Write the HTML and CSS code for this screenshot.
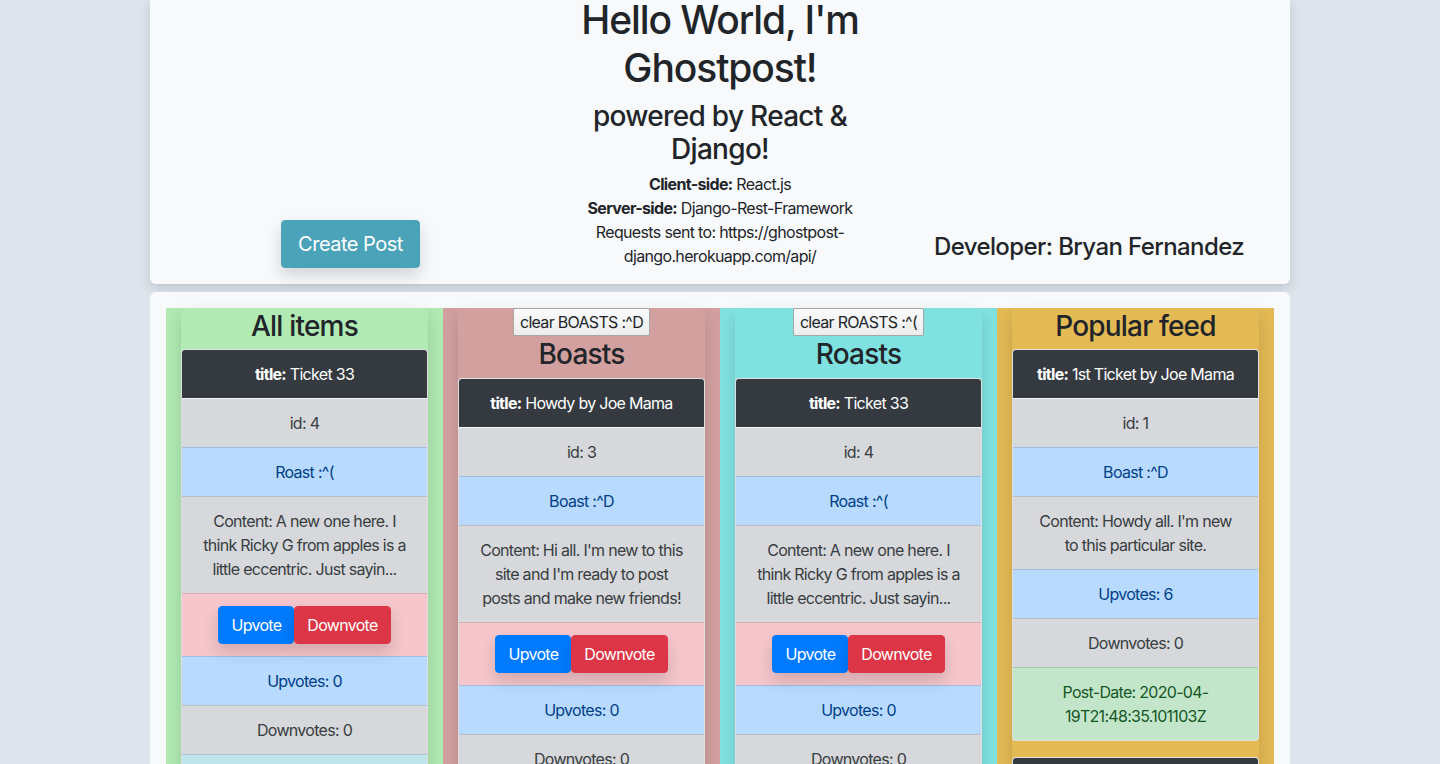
FILE: index.html
```html
<!DOCTYPE html>
<html lang="en">
<head>
<meta charset="utf-8">
<title>Ghostpost</title>
<link rel="stylesheet" href="styles.css">
</head>
<body>
<div class="container">
  <header class="hero">
    <div class="hero-left">
      <button class="btn-create">Create Post</button>
    </div>
    <div class="hero-mid">
      <h1 class="hero-title">Hello World, I'm Ghostpost!</h1>
      <h3 class="hero-sub">powered by React &amp; Django!</h3>
      <p class="hero-info"><b>Client-side:</b> React.js</p>
      <p class="hero-info"><b>Server-side:</b> Django-Rest-Framework</p>
      <p class="hero-info">Requests sent to: https://ghostpost-django.herokuapp.com/api/</p>
    </div>
    <div class="hero-right">
      <h4 class="dev">Developer: Bryan Fernandez</h4>
    </div>
  </header>

  <main class="board">
    <section class="lane lane-green">
      <div class="lane-inner">
        <h3 class="lane-title">All items</h3>
        <div class="post">
          <div class="row row-title"><b>title:</b> Ticket 33</div>
          <div class="row row-secondary">id: 4</div>
          <div class="row row-primary">Roast :^(</div>
          <div class="row row-secondary">Content: A new one here. I think Ricky G from apples is a little eccentric. Just sayin...</div>
          <div class="row row-danger"><span class="votes"><button class="btn btn-up">Upvote</button><button class="btn btn-down">Downvote</button></span></div>
          <div class="row row-primary">Upvotes: 0</div>
          <div class="row row-secondary">Downvotes: 0</div>
          <div class="row row-info">Post-Date: 2020-04-19T21:52:10.204411Z</div>
        </div>
      </div>
    </section>

    <section class="lane lane-rose">
      <div class="lane-inner">
        <button class="btn-clear">clear BOASTS :^D</button>
        <h3 class="lane-title">Boasts</h3>
        <div class="post">
          <div class="row row-title"><b>title:</b> Howdy by Joe Mama</div>
          <div class="row row-secondary">id: 3</div>
          <div class="row row-primary">Boast :^D</div>
          <div class="row row-secondary">Content: Hi all. I'm new to this site and I'm ready to post posts and make new friends!</div>
          <div class="row row-danger"><span class="votes"><button class="btn btn-up">Upvote</button><button class="btn btn-down">Downvote</button></span></div>
          <div class="row row-primary">Upvotes: 0</div>
          <div class="row row-secondary">Downvotes: 0</div>
          <div class="row row-info">Post-Date: 2020-04-19T21:50:02.311274Z</div>
        </div>
      </div>
    </section>

    <section class="lane lane-cyan">
      <div class="lane-inner">
        <button class="btn-clear">clear ROASTS :^(</button>
        <h3 class="lane-title">Roasts</h3>
        <div class="post">
          <div class="row row-title"><b>title:</b> Ticket 33</div>
          <div class="row row-secondary">id: 4</div>
          <div class="row row-primary">Roast :^(</div>
          <div class="row row-secondary">Content: A new one here. I think Ricky G from apples is a little eccentric. Just sayin...</div>
          <div class="row row-danger"><span class="votes"><button class="btn btn-up">Upvote</button><button class="btn btn-down">Downvote</button></span></div>
          <div class="row row-primary">Upvotes: 0</div>
          <div class="row row-secondary">Downvotes: 0</div>
          <div class="row row-info">Post-Date: 2020-04-19T21:52:10.204411Z</div>
        </div>
      </div>
    </section>

    <section class="lane lane-gold">
      <div class="lane-inner">
        <h3 class="lane-title">Popular feed</h3>
        <div class="post">
          <div class="row row-title"><b>title:</b> 1st Ticket by Joe Mama</div>
          <div class="row row-secondary">id: 1</div>
          <div class="row row-primary">Boast :^D</div>
          <div class="row row-secondary">Content: Howdy all. I'm new to this particular site.</div>
          <div class="row row-primary">Upvotes: 6</div>
          <div class="row row-secondary">Downvotes: 0</div>
          <div class="row row-success">Post-Date: 2020-04-19T21:48:35.101103Z</div>
        </div>
        <div class="post">
          <div class="row row-title"><b>title:</b> Howdy by Joe Mama</div>
          <div class="row row-secondary">id: 3</div>
          <div class="row row-primary">Boast :^D</div>
          <div class="row row-secondary">Content: Hi all. I'm new to this site and I'm ready to post posts and make new friends!</div>
          <div class="row row-primary">Upvotes: 2</div>
          <div class="row row-secondary">Downvotes: 0</div>
          <div class="row row-success">Post-Date: 2020-04-19T21:50:02.311274Z</div>
        </div>
      </div>
    </section>
  </main>
</div>
</body>
</html>
```

FILE: styles.css
```css
* { box-sizing: border-box; }

html, body {
  margin: 0;
  padding: 0;
}

body {
  background: #dee4ec;
  font-family: Inter, "Liberation Sans", Arial, sans-serif;
  font-size: 16px;
  line-height: 24px;
  color: #212529;
  overflow: hidden;
  height: 764px;
}

.container {
  width: 1140px;
  margin: 0 auto;
}

/* ---------- header card ---------- */
.hero {
  background: #f8f9fb;
  border-radius: 0 0 6px 6px;
  box-shadow: 0 4px 12px rgba(0, 0, 0, 0.14);
  height: 284px;
  display: grid;
  grid-template-columns: 1fr 350px 1fr;
  align-items: end;
  padding-bottom: 16px;
}

.hero-left,
.hero-right {
  display: flex;
  justify-content: center;
}

.hero-mid {
  text-align: center;
  align-self: start;
}

.hero-title {
  font-size: 39px;
  line-height: 48px;
  font-weight: 500;
  margin: -4px 0 8px;
  letter-spacing: -1.1px;
}

.hero-sub {
  font-size: 28px;
  line-height: 33px;
  font-weight: 500;
  margin: 0 0 6px;
  letter-spacing: -0.7px;
}

.hero-info {
  margin: 0;
  font-size: 16px;
  line-height: 24px;
  letter-spacing: -0.65px;
}

.hero-info b { font-weight: 700; }

.btn-create {
  font-family: inherit;
  font-size: 20px;
  line-height: 30px;
  padding: 8px 16px;
  border: 1px solid #4aa3b8;
  border-radius: 4px;
  background: #4aa3b8;
  color: #fff;
  box-shadow: 0 8px 16px rgba(0, 0, 0, 0.15);
  margin-left: 6px;
  letter-spacing: -0.5px;
}

.dev {
  font-size: 24px;
  line-height: 29px;
  font-weight: 500;
  margin: 0 7px 7px 0;
  letter-spacing: -0.6px;
}

/* ---------- board ---------- */
.board {
  margin-top: 8px;
  background: #f8f9fb;
  border-radius: 6px;
  padding: 16px;
  display: grid;
  grid-template-columns: repeat(4, 1fr);
  height: 600px;
}

.lane {
  padding: 0 15px;
}

.lane-green { background: #b1eab3; }
.lane-rose  { background: #d3a0a0; }
.lane-cyan  { background: #80e2e0; }
.lane-gold  { background: #e4ba54; }

.lane-inner {
  box-shadow: 0 8px 16px rgba(0, 0, 0, 0.15);
  min-height: 600px;
}

.lane-title {
  font-size: 28px;
  line-height: 34px;
  font-weight: 500;
  text-align: center;
  margin: 0 0 6px;
  padding-top: 1px;
  letter-spacing: -0.8px;
}

.btn-clear + .lane-title {
  padding-top: 0;
  margin-bottom: 7px;
}

.btn-clear {
  display: block;
  margin: 0 auto 1px;
  font-family: inherit;
  font-size: 16px;
  line-height: 24px;
  padding: 1px 6px;
  color: #212529;
  background: linear-gradient(#fbfbfb, #ededed);
  border: 1px solid #a6a6a6;
  border-radius: 2px;
  letter-spacing: -0.7px;
}

/* ---------- post card ---------- */
.post {
  border: 1px solid rgba(0, 0, 0, 0.125);
  border-radius: 4px;
  overflow: hidden;
  margin-bottom: 16px;
  background: #fff;
}

.row {
  padding: 12px 20px;
  text-align: center;
  border-top: 1px solid rgba(0, 0, 0, 0.125);
  letter-spacing: -0.7px;
}

.row:first-child { border-top: 0; }

.row-title {
  background: #343a40;
  color: #fff;
}
.row-title b { font-weight: 700; }

.row-title + .row {
  border-top-color: rgba(255, 255, 255, 0.7);
}

.row-secondary { background: #d6d8db; color: #383d41; }
.row-primary   { background: #b8daff; color: #004085; }
.row-danger    { background: #f5c6cb; color: #721c24; }
.row-success   { background: #c3e6cb; color: #155724; }
.row-info      { background: #bee5eb; color: #0c5460; }

.votes {
  display: inline-flex;
}

.btn {
  font-family: inherit;
  font-size: 16px;
  line-height: 24px;
  padding: 6px 12px;
  border-radius: 4px;
  color: #fff;
  box-shadow: 0 8px 16px rgba(0, 0, 0, 0.15);
  letter-spacing: -0.7px;
}

.btn-up {
  background: #007bff;
  border: 1px solid #007bff;
}

.btn-down {
  background: #dc3545;
  border: 1px solid #dc3545;
}
```
